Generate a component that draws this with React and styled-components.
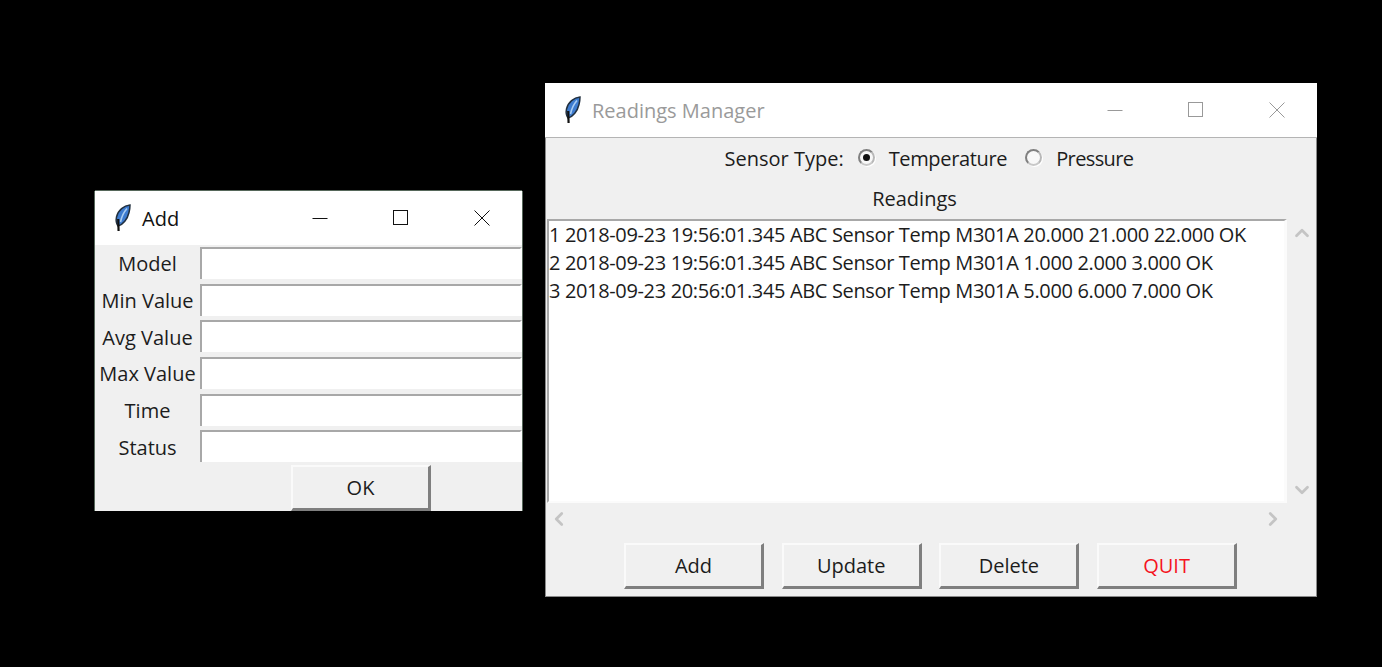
import React from 'react'
import styled, { createGlobalStyle } from 'styled-components'
import { ChevronUp, ChevronDown, ChevronLeft, ChevronRight } from 'lucide-react'

const GlobalStyle = createGlobalStyle`
    html, body {
        margin: 0;
        padding: 0;
        background: #000;
    }
    #root {
        position: relative;
        width: 1382px;
        height: 667px;
        overflow: hidden;
    }
`

const Window = styled.section`
    position: absolute;
    left: ${(p) => p.$x}px;
    top: ${(p) => p.$y}px;
    width: ${(p) => p.$w}px;
    height: ${(p) => p.$h}px;
    display: flex;
    flex-direction: column;
    background: #f0f0f0;
    font-family: "Open Sans", "Noto Sans", sans-serif;
    font-size: 20px;
    color: #1c1c1c;
    box-shadow: ${(p) => (p.$active ? '0 -1px #56675a, -1px 0 #56675a, 1px 0 #56675a' : 'none')};
`

const TitleBar = styled.header`
    height: ${(p) => (p.$inactive ? 55 : 54)}px;
    flex: none;
    box-sizing: border-box;
    display: flex;
    align-items: center;
    background: #fff;
    padding-left: 19px;
    border-bottom: ${(p) => (p.$inactive ? '1px solid #b4b4b4' : '0')};
    color: ${(p) => (p.$inactive ? '#9a9a9a' : '#111')};
`

const TitleText = styled.span`
    margin-left: 10px;
    flex: 1;
`

const WinButton = styled.div`
    width: 81px;
    height: 100%;
    display: flex;
    align-items: center;
    justify-content: center;
`

const Form = styled.div`
    display: grid;
    grid-template-columns: 105px 1fr;
    grid-auto-rows: 36.7px;
`

const FieldLabel = styled.label`
    display: flex;
    align-items: center;
    justify-content: center;
    padding-top: 1px;
`

const Entry = styled.div`
    margin-top: 2px;
    height: 32px;
    box-sizing: border-box;
    background: #fff;
    border-top: 2px solid #a8a8a8;
    border-left: 2px solid #a8a8a8;
    border-right: 2px solid #fff;
`

const FormFooter = styled.div`
    flex: 1;
    display: flex;
    justify-content: center;
    padding-left: 105px;
`

const Button = styled.button`
    width: 140px;
    height: 46px;
    box-sizing: border-box;
    padding: 0;
    font: inherit;
    color: ${(p) => (p.$danger ? '#f5141e' : '#1c1c1c')};
    background: #f0f0f0;
    border-style: solid;
    border-width: 2px 3px 3px 2px;
    border-color: #fafafa #7f7f7f #7f7f7f #fafafa;
`

const ManagerBody = styled.div`
    flex: 1;
    display: flex;
    flex-direction: column;
    box-shadow: inset 1px 0 #8a8a8a, inset -1px 0 #8a8a8a, inset 0 -1px #8a8a8a;
`

const SensorRow = styled.div`
    height: 41px;
    display: flex;
    align-items: center;
    justify-content: center;
    padding-right: 4px;
`

const RadioLabel = styled.span`
    display: flex;
    align-items: center;
    margin-left: ${(p) => p.$gap}px;
    letter-spacing: ${(p) => p.$tight}px;
`

const Radio = styled.span`
    width: 17px;
    height: 17px;
    box-sizing: border-box;
    margin: -3px 14px 0 0;
    border-radius: 50%;
    background: #f8f8f8;
    border: 2px solid;
    border-color: #808080 #b8b8b8 #c8c8c8 #808080;
    box-shadow: 1px 1px 0 #fff;
    display: flex;
    align-items: center;
    justify-content: center;

    &::after {
        content: "";
        width: 7px;
        height: 7px;
        border-radius: 50%;
        background: ${(p) => (p.$checked ? '#111' : 'transparent')};
    }
`

const SectionTitle = styled.div`
    height: 40px;
    display: flex;
    align-items: center;
    justify-content: center;
    padding: 0 33px 1px 0;
    box-sizing: border-box;
`

const ListArea = styled.div`
    display: grid;
    grid-template-columns: 740px 1fr;
    grid-template-rows: 284px 32px;
    padding-left: 2px;
`

const ListBox = styled.div`
    box-sizing: border-box;
    background: #fff;
    border-style: solid;
    border-width: 2px 3px 2px 2px;
    border-color: #a8a8a8 #fbfbfb #fbfbfb #a8a8a8;
    line-height: 28px;
    white-space: nowrap;
    overflow: hidden;
    letter-spacing: -0.35px;
`

const VScroll = styled.div`
    display: flex;
    flex-direction: column;
    justify-content: space-between;
    align-items: center;
    padding: 3px 0 2px;
    color: #c4c4c4;
`

const HScroll = styled.div`
    display: flex;
    justify-content: space-between;
    align-items: center;
    padding: 0 3px 0 1px;
    color: #c4c4c4;
`

const ButtonRow = styled.div`
    display: flex;
    justify-content: center;
    gap: 17.7px;
    margin-top: 8px;
    padding-right: 1px;
`

// tk feather, same one on both windows
const Feather = () => (
    <svg width="18" height="28" viewBox="0 0 18 28">
        <path d="M16 1 C10 1.5 4 6 2.5 13 C1.8 16.5 2.5 20 4 22 C9 21 13.5 15 15 8.5 C15.7 5.5 16 3 16 1 Z" fill="#3d7bcf" stroke="#22303f" strokeWidth="1.5" />
        <path d="M13 4.5 C9.5 8.5 7.5 13 6.5 18" fill="none" stroke="#a9cdf2" strokeWidth="1.6" />
        <path d="M4.2 15 L4.6 27" fill="none" stroke="#111" strokeWidth="2.2" />
    </svg>
)

const WinControls = ({ color }) => (
    <>
        <WinButton>
            <svg width="16" height="16"><path d="M0.5 8.5 H15.5" stroke={color} /></svg>
        </WinButton>
        <WinButton>
            <svg width="16" height="16"><rect x="0.5" y="0.5" width="14" height="14" fill="none" stroke={color} /></svg>
        </WinButton>
        <WinButton>
            <svg width="16" height="16"><path d="M0.5 0.5 L15.5 15.5 M15.5 0.5 L0.5 15.5" stroke={color} /></svg>
        </WinButton>
    </>
)

const fields = ['Model', 'Min Value', 'Avg Value', 'Max Value', 'Time', 'Status']

const readings = [
    '1 2018-09-23 19:56:01.345 ABC Sensor Temp M301A 20.000 21.000 22.000 OK',
    '2 2018-09-23 19:56:01.345 ABC Sensor Temp M301A 1.000 2.000 3.000 OK',
    '3 2018-09-23 20:56:01.345 ABC Sensor Temp M301A 5.000 6.000 7.000 OK',
]

const App = () => {
    return (
        <>
            <GlobalStyle />
            <Window $active $x={95} $y={191} $w={427} $h={320}>
                <TitleBar>
                    <Feather />
                    <TitleText>Add</TitleText>
                    <WinControls color="#111" />
                </TitleBar>
                <Form>
                    {fields.map((f) => (
                        <React.Fragment key={f}>
                            <FieldLabel>{f}</FieldLabel>
                            <Entry />
                        </React.Fragment>
                    ))}
                </Form>
                <FormFooter>
                    <Button>OK</Button>
                </FormFooter>
            </Window>

            <Window $x={545} $y={83} $w={772} $h={514}>
                <TitleBar $inactive>
                    <Feather />
                    <TitleText>Readings Manager</TitleText>
                    <WinControls color="#999" />
                </TitleBar>
                <ManagerBody>
                    <SensorRow>
                        Sensor Type:
                        <RadioLabel $gap={14} $tight={-0.35}><Radio $checked />Temperature</RadioLabel>
                        <RadioLabel $gap={18} $tight={-0.6}><Radio />Pressure</RadioLabel>
                    </SensorRow>
                    <SectionTitle>Readings</SectionTitle>
                    <ListArea>
                        <ListBox>
                            {readings.map((r) => (
                                <div key={r}>{r}</div>
                            ))}
                        </ListBox>
                        <VScroll>
                            <ChevronUp size={22} strokeWidth={3} />
                            <ChevronDown size={22} strokeWidth={3} />
                        </VScroll>
                        <HScroll>
                            <ChevronLeft size={22} strokeWidth={3} />
                            <ChevronRight size={22} strokeWidth={3} />
                        </HScroll>
                    </ListArea>
                    <ButtonRow>
                        <Button>Add</Button>
                        <Button>Update</Button>
                        <Button>Delete</Button>
                        <Button $danger>QUIT</Button>
                    </ButtonRow>
                </ManagerBody>
            </Window>
        </>
    )
}

export default App
